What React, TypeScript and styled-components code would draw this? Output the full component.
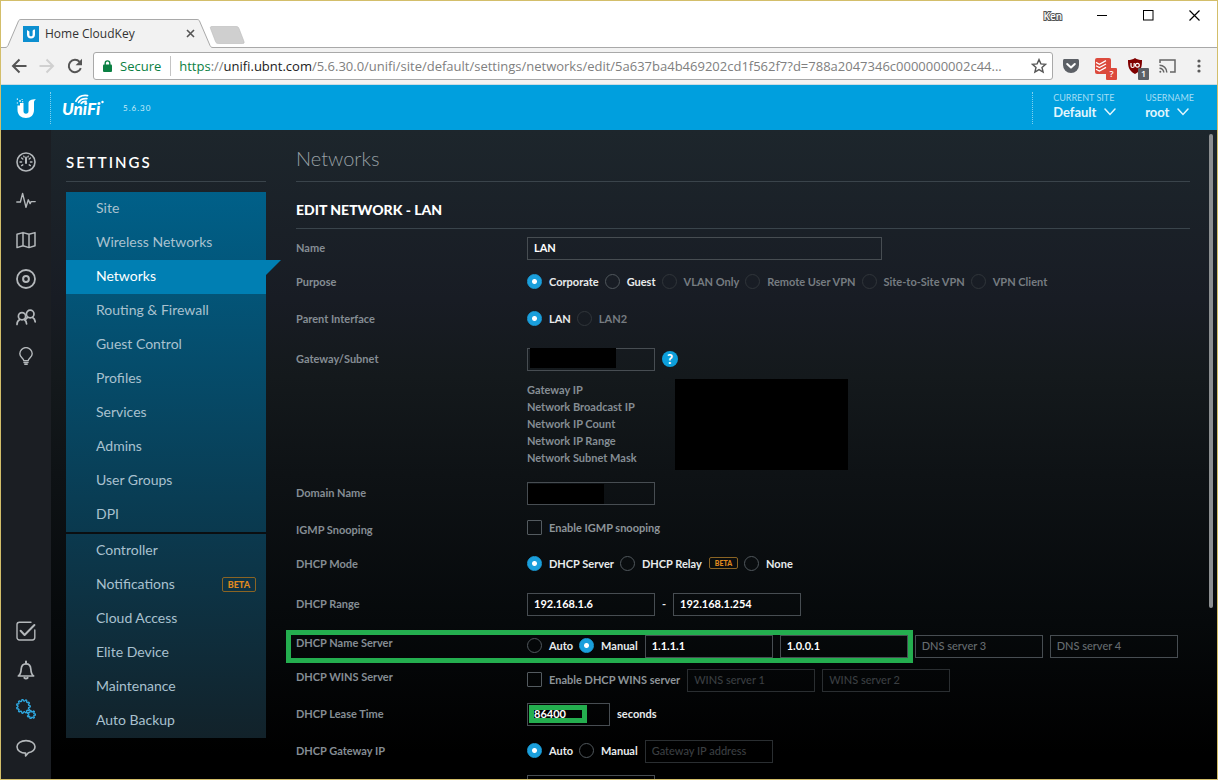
import React from "react";
import styled, { createGlobalStyle, css } from "styled-components";

const ui = `"Open Sans", "Noto Sans", sans-serif`;
const lato = `Lato, "Open Sans", sans-serif`;

const GlobalStyle = createGlobalStyle`
  *, *::before, *::after { box-sizing: border-box; }
  body { margin: 0; background: #000; font-family: ${lato}; }
  button, input, select { font: inherit; color: inherit; margin: 0; }
  button { padding: 0; border: 0; background: none; cursor: pointer; }
  ul { list-style: none; margin: 0; padding: 0; }
  svg { display: block; flex: none; }
`;

const Window = styled.div`
  display: flex;
  flex-direction: column;
  height: 100vh;
  border: 1px solid #d3be6a;
  overflow: hidden;
`;

/* ---------- browser chrome ---------- */

const TitleBar = styled.div`
  display: flex;
  justify-content: space-between;
  height: 47px;
  flex: none;
  background: #fff;
  border-bottom: 1px solid #a9a9a9;
  font-family: ${ui};
`;

const Tabs = styled.div`
  display: flex;
  align-items: flex-end;
  padding-left: 4px;
`;

const Tab = styled.div`
  position: relative;
  display: flex;
  align-items: center;
  width: 208px;
  height: 29px;
  margin-bottom: -1px;
  padding: 0 18px;
  font-size: 12px;
  color: #333;
`;

const TabShape = styled.svg`
  position: absolute;
  inset: 0;
`;

const TabTitle = styled.span`
  position: relative;
  flex: 1;
  margin-left: 6px;
  white-space: nowrap;
`;

const TabPart = styled.span`
  position: relative;
  display: flex;
`;

const TabClose = styled.button`
  position: relative;
`;

const NewTab = styled.button`
  margin: 0 0 3px -4px;
`;

const WindowButtons = styled.div`
  display: flex;
  align-items: center;
  gap: 35px;
  height: 29px;
  padding-right: 17px;
`;

const Profile = styled.button`
  font-size: 10px;
  font-weight: 600;
  color: #fff;
  -webkit-text-stroke: 2px #555;
  paint-order: stroke fill;
`;

const Toolbar = styled.div`
  display: flex;
  align-items: center;
  height: 37px;
  flex: none;
  padding: 0 8px 0 10px;
  background: #f2f2f2;
  border-bottom: 1px solid #c9dbe3;
  font-family: ${ui};
`;

const NavButtons = styled.div`
  display: flex;
  gap: 12px;
  margin-right: 10px;
`;

const Omnibox = styled.div`
  display: flex;
  align-items: center;
  flex: 1;
  min-width: 0;
  height: 28px;
  padding: 0 5px 0 9px;
  background: #fff;
  border: 1px solid #a9a9a9;
  border-radius: 3px;
  font-size: 13px;
  line-height: 20px;
`;

const Secure = styled.span`
  margin: 0 9px 0 8px;
  color: #0b8043;
`;

const Address = styled.div`
  flex: 1;
  min-width: 0;
  padding-left: 8px;
  border-left: 1px solid #c4c4c4;
  overflow: hidden;
  text-overflow: ellipsis;
  white-space: nowrap;
  color: #808080;
  outline: none;
`;

const Scheme = styled.span`
  color: #0b8043;
`;

const Host = styled.span`
  color: #222;
`;

const Extensions = styled.div`
  display: flex;
  align-items: center;
  gap: 12px;
  margin-left: 8px;
`;

const Extension = styled.button`
  position: relative;
  display: flex;
  justify-content: center;
  width: 20px;
`;

const ExtBadge = styled.span<{ $color: string }>`
  position: absolute;
  left: 13px;
  top: 10px;
  width: 11px;
  height: 12px;
  border-radius: 1px;
  background: ${(p) => p.$color};
  color: #fff;
  font-size: 9px;
  font-weight: 600;
  line-height: 12px;
  text-align: center;
`;

/* ---------- application header ---------- */

const Header = styled.header`
  display: flex;
  align-items: center;
  justify-content: space-between;
  height: 45px;
  flex: none;
  background: #009fde;
  color: #e3f6fd;
`;

const Brand = styled.div`
  display: flex;
  align-items: center;
`;

const LogoCell = styled.a`
  display: flex;
  justify-content: center;
  width: 50px;
  height: 32px;
  margin-right: 10px;
  align-items: center;
  border-right: 1px dotted #7fd0ef;
`;

const Version = styled.span`
  margin-left: 18px;
  font-size: 8px;
  letter-spacing: 1px;
  color: #c9ecf9;
`;

const Account = styled.div`
  display: flex;
  gap: 29px;
  height: 32px;
  padding: 0 23px 0 20px;
  border-left: 1px dotted #7fd0ef;
`;

const Picker = styled.div`
  display: flex;
  flex-direction: column;
`;

const PickerLabel = styled.label`
  font-size: 9px;
  line-height: 12px;
  color: #a5def5;
`;

const PickerValue = styled.div`
  display: flex;
  align-items: center;
  gap: 7px;
`;

const PickerSelect = styled.select`
  appearance: none;
  padding: 0;
  border: 0;
  background: none;
  font-size: 13px;
  font-weight: 700;
  line-height: 16px;
  color: #e3f6fd;
`;

/* ---------- application body ---------- */

const Body = styled.div`
  position: relative;
  display: flex;
  flex: 1;
  min-height: 0;
  overflow: hidden;
  background: linear-gradient(#1d262c 0%, #181c24 26%, #14191c 38%, #0e1215 53%, #06090b 76%, #000 96%);
`;

const Rail = styled.nav`
  display: flex;
  flex-direction: column;
  justify-content: space-between;
  flex: none;
  width: 50px;
  padding: 12px 0;
  background: #1b1e23;
`;

const RailGroup = styled.div`
  display: flex;
  flex-direction: column;
`;

const RailButton = styled.button<{ $active?: boolean }>`
  display: flex;
  align-items: center;
  justify-content: center;
  height: 39px;
  color: ${(p) => (p.$active ? "#2fa8e0" : "#b4b8bb")};
`;

const Side = styled.aside`
  flex: none;
  width: 215px;
  padding-left: 15px;
`;

const SideTitle = styled.h1`
  height: 52px;
  margin: 0 0 10px;
  padding-top: 12px;
  border-bottom: 1px solid #3a444b;
  font-size: 15px;
  font-weight: 600;
  line-height: 40px;
  letter-spacing: 2px;
  color: #fff;
`;

const Menu = styled.nav`
  display: flex;
  flex-direction: column;
  gap: 2px;
`;

const MenuGroup = styled.ul<{ $from: string; $to: string }>`
  background: linear-gradient(${(p) => p.$from}, ${(p) => p.$to});
`;

const MenuItem = styled.li`
  position: relative;
`;

const MenuLink = styled.a<{ $active?: boolean }>`
  display: flex;
  align-items: center;
  justify-content: space-between;
  height: 34px;
  padding: 0 10px 2px 30px;
  font-size: 14px;
  line-height: 16px;
  color: #a9c1cf;
  text-decoration: none;
  ${(p) =>
    p.$active &&
    css`
      background: #007fb3;
      color: #fff;
      &::after {
        content: "";
        position: absolute;
        left: 100%;
        top: 0;
        border: solid transparent;
        border-width: 15px 15px 0 0;
        border-top-color: #007fb3;
      }
    `}
`;

const Beta = styled.span<{ $small?: boolean }>`
  border: 1px solid #8a6424;
  border-radius: 2px;
  padding: 0 5px;
  font-size: ${(p) => (p.$small ? 7 : 9)}px;
  font-weight: 900;
  line-height: ${(p) => (p.$small ? 10 : 13)}px;
  color: #e08a1e;
`;

const Main = styled.main`
  flex: 1;
  min-width: 0;
  padding: 0 27px 0 30px;
`;

const PageTitle = styled.h2`
  height: 52px;
  margin: 0;
  padding-top: 12px;
  border-bottom: 1px solid #3a444b;
  font-size: 20px;
  font-weight: 300;
  line-height: 32px;
  color: #98a0a5;
`;

const SectionTitle = styled.h3`
  height: 47px;
  margin: 0;
  padding-top: 8px;
  border-bottom: 1px solid #3a444b;
  font-size: 14px;
  font-weight: 900;
  line-height: 40px;
  color: #fff;
`;

const Row = styled.div<{ $h: number }>`
  position: relative;
  display: grid;
  grid-template-columns: 231px 1fr;
  align-items: start;
  min-height: ${(p) => p.$h}px;
  font-size: 11px;
  font-weight: 700;
  color: #e8ebec;
`;

const RowLabel = styled.span<{ $h: number }>`
  line-height: ${(p) => p.$h}px;
  color: #858d94;
`;

const Controls = styled.div<{ $h: number }>`
  position: relative;
  display: flex;
  align-items: center;
  gap: 7px;
  height: ${(p) => p.$h}px;
  white-space: nowrap;
`;

const Choices = styled.div`
  display: flex;
  gap: 6px;
`;

const Choice = styled.label<{ $muted?: boolean; $disabled?: boolean }>`
  display: flex;
  align-items: center;
  gap: 7px;
  padding-bottom: 2px;
  ${(p) => p.$muted && "color: #8d9499;"}
  ${(p) => p.$disabled && "color: #767c81;"}
`;

const Radio = styled.input.attrs({ type: "radio" })`
  appearance: none;
  width: 15px;
  height: 15px;
  border: 1px solid #50575c;
  border-radius: 50%;
  &:checked {
    border-color: #1a9fdc;
    background: radial-gradient(circle, #fff 2px, #1a9fdc 3px);
  }
  &:disabled {
    border-color: #30353a;
  }
`;

const Check = styled.input.attrs({ type: "checkbox" })`
  appearance: none;
  width: 15px;
  height: 15px;
  border: 1px solid #545b60;
  border-radius: 1px;
`;

const Field = styled.input.attrs({ type: "text" })<{ $w?: number }>`
  position: relative;
  width: ${(p) => p.$w ?? 128}px;
  height: 23px;
  padding: 0 6px 2px;
  border: 1px solid #474d52;
  border-radius: 0;
  background: none;
  color: #fff;
  outline: none;
  &::placeholder {
    color: #666c70;
    font-weight: 500;
  }
  &:disabled {
    border-color: #2a2e31;
  }
  &:disabled::placeholder {
    color: #3b3f42;
  }
`;

const Unit = styled.span`
  padding-bottom: 2px;
`;

const Help = styled.button`
  width: 16px;
  height: 16px;
  border-radius: 50%;
  background: #0d9fdb;
  color: #fff;
  font-size: 13px;
  font-weight: 900;
  line-height: 15px;
`;

const Redaction = styled.span<{ $x: number; $y: number; $w: number }>`
  position: absolute;
  left: ${(p) => p.$x}px;
  top: ${(p) => p.$y}px;
  width: ${(p) => p.$w}px;
  height: 20px;
  background: #000;
`;

const Info = styled.div`
  display: flex;
  align-items: center;
  padding-top: 2px;
`;

const InfoList = styled.ul`
  width: 148px;
  padding-bottom: 2px;
  line-height: 17px;
  color: #858d94;
`;

const InfoValues = styled.div`
  width: 173px;
  height: 91px;
  background: #000;
`;

const Highlight = styled.span<{ $x: number; $y: number; $w: number; $h: number }>`
  position: absolute;
  left: ${(p) => p.$x}px;
  top: ${(p) => p.$y}px;
  width: ${(p) => p.$w}px;
  height: ${(p) => p.$h}px;
  border: 5px solid #24ae4f;
  pointer-events: none;
`;

const ScrollThumb = styled.div`
  position: absolute;
  right: 4px;
  top: 4px;
  width: 4px;
  height: 73%;
  border-radius: 2px;
  background: #8c8f91;
`;

/* ---------- drawings ---------- */

const line = {
  fill: "none",
  stroke: "currentColor",
  strokeWidth: 1.4,
  strokeLinecap: "round" as const,
  strokeLinejoin: "round" as const,
};

const gear = (cx: number, cy: number, r: number, n: number) =>
  Array.from({ length: n * 4 }, (_, i) => {
    const a = ((i - 0.5) / (n * 4)) * Math.PI * 2;
    const rad = i % 4 < 2 ? r + 1.3 : r - 0.2;
    return `${i ? "L" : "M"}${(cx + rad * Math.cos(a)).toFixed(2)} ${(cy + rad * Math.sin(a)).toFixed(2)}`;
  }).join("") + "Z";

const railIcons: Record<string, React.ReactNode> = {
  Dashboard: (
    <>
      <circle cx="10" cy="10" r="9" strokeWidth="1.6" />
      <path d="M10 5.5v5.5" strokeWidth="2" />
      <path d="M4 10h1.6M14.4 10H16M5.6 6l1.2 1M14.4 6l-1.2 1M5.6 13.6l1.2-.8M14.4 13.6l-1.2-.8M7.8 4.2l.3.8M12.2 4.2l-.3.8" />
    </>
  ),
  Statistics: <path d="M.8 11h3.6L6.6 2.4l3.4 14 2.3-7.6 1.8 3.800 1-2h4.100" />,
  Map: (
    <path d="M1 4.200 7 2.600v13.200l-6 1.800zM7 2.600l6 1.600v13.400l-6-1.800zM13 4.200l6-1.600v13.200l-6 1.800z" strokeWidth="1.500" />
  ),
  Devices: (
    <>
      <circle cx="10" cy="10" r="9" strokeWidth="1.8" />
      <circle cx="10" cy="10" r="2.900" strokeWidth="2" />
    </>
  ),
  Clients: (
    <>
      <circle cx="6" cy="8.200" r="3.600" strokeWidth="1.700" />
      <circle cx="14.200" cy="6" r="3.800" strokeWidth="1.700" />
      <path d="M1 16.400c0-2.400 1-3.800 2.800-4.800M8.200 11.400c1.400.8 2.200 2.400 2.400 4.600M11.800 9.400c-1 .4-1.800 1.200-2.200 2.200M16.600 9.400c1.600.8 2.400 2.200 2.600 4.400" strokeWidth="1.700" />
    </>
  ),
  Insights: (
    <>
      <path d="M7.800 13.800c0-2.400-4-3.400-4-7a6.200 6.200 0 0 1 12.400 0c0 3.600-4 4.600-4 7z" />
      <path d="M7.900 15.600h4.200M8.800 17.300h2.400" />
    </>
  ),
  Tasks: (
    <>
      <path d="M15 1.200H3.400A2.400 2.400 0 0 0 1 3.600v13A2.400 2.400 0 0 0 3.400 19h13a2.400 2.400 0 0 0 2.400-2.400V9" />
      <path d="m4.600 9.800 4 4.200L18.400 4" strokeWidth="2" />
    </>
  ),
  Alerts: (
    <>
      <path d="M2.400 16c2.200-1.600 2.600-3.600 2.800-7 .2-3.200 1.800-5.200 4.800-5.200s4.600 2 4.800 5.200c.2 3.400.6 5.400 2.800 7z" strokeWidth="1.700" />
      <path d="M10 1.400v2M8.400 17.800c.8 1 2.400 1 3.200 0" strokeWidth="2" />
    </>
  ),
  Settings: (
    <>
      <path d={gear(7.4, 7.4, 5.6, 11)} strokeWidth="1.300" />
      <path d={gear(15.4, 15.6, 2.9, 7)} strokeWidth="1.300" />
    </>
  ),
  Chat: (
    <path d="M10 2.600c5 0 9 2.600 9 6.200 0 3-2.900 5.200-6.600 6L9.600 18v-2.900C4.800 15.100 1 12.400 1 8.800s4-6.200 9-6.200z" strokeWidth="1.600" />
  ),
};

const ULogo = () => (
  <svg width="22" height="22" viewBox="0 0 22 22" fill="#fff">
    <path d="M2.500 8.500H5V6h3.500v8c0 1.800.9 2.700 2.500 2.700s2.500-.9 2.500-2.700V6c0-2.500 2.500-3.800 7.500-3.800-1.500.8-2 1.800-2 3.300V13c0 5-3.200 8-8 8s-8.500-3-8.500-8z" />
    <path d="M1.800 1.600H3v1.200H1.800zM4.200 3.200h1.600v1.600H4.200zM1.800 5.400H3v1.200H1.800zM6.600 2h1v1h-1zM7 4.200h1.200v1H7z" />
  </svg>
);

const UnifiLogo = () => (
  <svg width="44" height="28" viewBox="0 0 44 28">
    <text x="1" y="21" fill="#fff" fontFamily={`"Liberation Sans Narrow", Lato, sans-serif`} fontSize="17" fontWeight="900" fontStyle="italic">
      UniFi
    </text>
    <g fill="none" stroke="#fff" strokeWidth="1.800" strokeLinecap="round">
      <path d="M15 7.200C17 3 21 .8 26.500 1.600" />
      <path d="M17.600 8.400C19.200 5.600 22 4.200 25.800 4.600" />
      <path d="M20.200 9.400c1.200-1.600 2.800-2.200 4.800-2" />
    </g>
    <circle cx="41.500" cy="8" r="1.200" fill="#fff" />
  </svg>
);

const Chevron = () => (
  <svg width="12" height="8" viewBox="0 0 12 8" fill="none" stroke="#e3f6fd" strokeWidth="1.500" strokeLinecap="round">
    <path d="m1 1 5 5.400L11 1" />
  </svg>
);

/* ---------- data ---------- */

const siteMenu = ["Site", "Wireless Networks", "Networks", "Routing & Firewall", "Guest Control", "Profiles", "Services", "Admins", "User Groups", "DPI"];
const controllerMenu = ["Controller", "Notifications", "Cloud Access", "Elite Device", "Maintenance", "Auto Backup"];
const infoLabels = ["Gateway IP", "Network Broadcast IP", "Network IP Count", "Network IP Range", "Network Subnet Mask"];

interface Option {
  text: string;
  disabled?: boolean;
  beta?: boolean;
}

const RadioSet = ({ name, value, options }: { name: string; value: string; options: Option[] }) => (
  <Choices>
    {options.map((o) => (
      <Choice key={o.text} $disabled={o.disabled}>
        <Radio name={name} defaultChecked={o.text === value} disabled={o.disabled} />
        {o.text}
        {o.beta && <Beta $small>BETA</Beta>}
      </Choice>
    ))}
  </Choices>
);

interface FormRowProps {
  label: string;
  h: number;
  labelH?: number;
  controlH?: number;
  children: React.ReactNode;
}

const FormRow = ({ label, h, labelH = h, controlH = h, children }: FormRowProps) => (
  <Row $h={h} role="group" aria-label={label}>
    <RowLabel $h={labelH}>{label}</RowLabel>
    <Controls $h={controlH}>{children}</Controls>
  </Row>
);

const RailItems = ({ names, active }: { names: string[]; active?: string }) => (
  <RailGroup>
    {names.map((n) => (
      <RailButton key={n} aria-label={n} $active={n === active}>
        <svg width="20" height="20" viewBox="0 0 20 20" {...line}>
          {railIcons[n]}
        </svg>
      </RailButton>
    ))}
  </RailGroup>
);

const MenuItems = ({ items }: { items: string[] }) => (
  <>
    {items.map((item) => (
      <MenuItem key={item}>
        <MenuLink href="#" $active={item === "Networks"}>
          {item}
          {item === "Notifications" && <Beta>BETA</Beta>}
        </MenuLink>
      </MenuItem>
    ))}
  </>
);

const BrowserChrome = () => (
  <>
    <TitleBar>
      <Tabs>
        <Tab>
          <TabShape width="208" height="29" viewBox="0 0 208 29">
            <path d="M0 28.500C2 28.500 2.500 27.500 3 26.500L13.500 2C14 1 14.500.5 16 .5H192c1.500 0 2 .5 2.500 1.500L205 26.500c.5 1 1 2 3 2V29H0z" fill="#f2f2f2" />
            <path d="M0 28.500C2 28.500 2.500 27.500 3 26.500L13.500 2C14 1 14.500.5 16 .5H192c1.500 0 2 .5 2.500 1.500L205 26.500c.5 1 1 2 3 2" fill="none" stroke="#a9a9a9" />
          </TabShape>
          <TabPart>
            <svg width="16" height="16" viewBox="0 0 16 16">
              <rect width="16" height="16" fill="#0c8fd0" />
              <path d="M4 4v4.500c0 2.500 1.600 4 4 4s4-1.500 4-4V3.500c-1.600 0-2.400.6-2.400 1.600v3.600c0 1-.6 1.600-1.600 1.600s-1.600-.6-1.600-1.600V5.600z" fill="#fff" />
            </svg>
          </TabPart>
          <TabTitle>Home CloudKey</TabTitle>
          <TabClose aria-label="Close tab">
            <svg width="9" height="9" viewBox="0 0 9 9" stroke="#555" strokeWidth="1.600">
              <path d="m1 1 7 7M8 1 1 8" />
            </svg>
          </TabClose>
        </Tab>
        <NewTab aria-label="New tab">
          <svg width="36" height="18" viewBox="0 0 36 18">
            <path d="M3 .5h24c1.500 0 2.500.5 3 2l5 13c.5 1.500 0 2-1.500 2H9.500c-1.500 0-2.500-.5-3-2L1.500 2.500C1 1 1.500.5 3 .5z" fill="#cfcfcf" stroke="#bbb" strokeWidth=".6" />
          </svg>
        </NewTab>
      </Tabs>
      <WindowButtons>
        <Profile>Ken</Profile>
        <button aria-label="Minimize">
          <svg width="11" height="11" viewBox="0 0 11 11" stroke="#000"><path d="M0 5.500h10" /></svg>
        </button>
        <button aria-label="Maximize">
          <svg width="11" height="11" viewBox="0 0 11 11" stroke="#000" fill="none"><rect x=".5" y=".5" width="9.500" height="9.500" /></svg>
        </button>
        <button aria-label="Close">
          <svg width="11" height="11" viewBox="0 0 11 11" stroke="#000" strokeWidth="1.200"><path d="m.5.5 10 10M10.500.5l-10 10" /></svg>
        </button>
      </WindowButtons>
    </TitleBar>
    <Toolbar>
      <NavButtons>
        <button aria-label="Back">
          <svg width="16" height="16" viewBox="0 0 16 16" fill="none" stroke="#555" strokeWidth="2"><path d="M15.500 8H2.500M8.500 1.500 2 8l6.500 6.500" /></svg>
        </button>
        <button aria-label="Forward" disabled>
          <svg width="16" height="16" viewBox="0 0 16 16" fill="none" stroke="#d0d0d0" strokeWidth="2"><path d="M.5 8h13M7.500 1.500 14 8l-6.500 6.500" /></svg>
        </button>
        <button aria-label="Reload">
          <svg width="16" height="16" viewBox="0 0 16 16" fill="none" stroke="#555" strokeWidth="2"><path d="M13.800 10.200A6.200 6.200 0 1 1 12.600 3.800" /><path d="M15 .8v6.400H8.600z" fill="#555" stroke="none" /></svg>
        </button>
      </NavButtons>
      <Omnibox>
        <svg width="9" height="12" viewBox="0 0 9 12"><rect y="4.500" width="9" height="7.500" rx="1" fill="#0b8043" /><path d="M2.200 5V3.200a2.300 2.300 0 0 1 4.600 0V5" fill="none" stroke="#0b8043" strokeWidth="1.400" /></svg>
        <Secure>Secure</Secure>
        <Address role="textbox" aria-label="Address" contentEditable suppressContentEditableWarning>
          <Scheme>https</Scheme>://<Host>unifi.ubnt.com</Host>/5.6.30.0/unifi/site/default/settings/networks/edit/5a637ba4b469202cd1f562f7?d=788a2047346c0000000002c44...
        </Address>
        <svg width="16" height="16" viewBox="0 0 16 16" fill="none" stroke="#555" strokeWidth="1.400"><path d="m8 1.600 1.900 4.300 4.700.4-3.600 3.100 1.100 4.600L8 11.600 3.900 14 5 9.400 1.400 6.300l4.700-.4z" /></svg>
      </Omnibox>
      <Extensions>
        <Extension aria-label="Pocket">
          <svg width="16" height="16" viewBox="0 0 16 16"><path d="M1.500 1h13C15.400 1 16 1.600 16 2.500V7a8 8 0 0 1-16 0V2.500C0 1.600.6 1 1.500 1z" fill="#5c6066" /><path d="M4.200 6 8 9.600 11.800 6" fill="none" stroke="#fff" strokeWidth="2" strokeLinecap="round" strokeLinejoin="round" /></svg>
        </Extension>
        <Extension aria-label="Todoist">
          <svg width="16" height="16" viewBox="0 0 16 16"><rect width="16" height="16" rx="2" fill="#dc4a3d" /><path d="m1 4.400 3.400 1.800L11 2.600M1 7.800l3.400 1.800L11 6M1 11.200 4.400 13 11 9.400" fill="none" stroke="#fff" strokeWidth="1.200" /></svg>
          <ExtBadge $color="#dc4a3d">?</ExtBadge>
        </Extension>
        <Extension aria-label="uBlock">
          <svg width="16" height="16" viewBox="0 0 16 16"><path d="M8 0c2 1.400 4.500 2 7 2 0 6.600-.6 10.600-7 14C1.600 12.600 1 8.600 1 2c2.500 0 5-.6 7-2z" fill="#800000" /><path d="M4 5v3c0 1 .6 1.500 1.500 1.500S7.200 9 7.200 8V5" fill="none" stroke="#fff" strokeWidth="1.200" /><circle cx="10.400" cy="7.200" r="1.900" fill="none" stroke="#fff" strokeWidth="1.200" /></svg>
          <ExtBadge $color="#5c6066">1</ExtBadge>
        </Extension>
        <Extension aria-label="Cast">
          <svg width="17" height="14" viewBox="0 0 17 14" fill="none" stroke="#666" strokeWidth="1.500"><path d="M1 4V1h15v12h-5M.5 6.200A7.300 7.300 0 0 1 7.800 13.500M.5 9.200a4.300 4.300 0 0 1 4.300 4.300" /><circle cx="1.300" cy="12.700" r="1" fill="#666" stroke="none" /></svg>
        </Extension>
        <Extension aria-label="Menu">
          <svg width="4" height="14" viewBox="0 0 4 14" fill="#5a5a5a"><circle cx="2" cy="2" r="1.600" /><circle cx="2" cy="7" r="1.600" /><circle cx="2" cy="12" r="1.600" /></svg>
        </Extension>
      </Extensions>
    </Toolbar>
  </>
);

export default function App() {
  return (
    <Window>
      <GlobalStyle />
      <BrowserChrome />
      <Header>
        <Brand>
          <LogoCell href="#" aria-label="Ubiquiti"><ULogo /></LogoCell>
          <UnifiLogo />
          <Version>5.6.30</Version>
        </Brand>
        <Account>
          <Picker>
            <PickerLabel htmlFor="site">CURRENT SITE</PickerLabel>
            <PickerValue>
              <PickerSelect id="site"><option>Default</option></PickerSelect>
              <Chevron />
            </PickerValue>
          </Picker>
          <Picker>
            <PickerLabel htmlFor="user">USERNAME</PickerLabel>
            <PickerValue>
              <PickerSelect id="user"><option>root</option></PickerSelect>
              <Chevron />
            </PickerValue>
          </Picker>
        </Account>
      </Header>
      <Body>
        <Rail>
          <RailItems names={["Dashboard", "Statistics", "Map", "Devices", "Clients", "Insights"]} />
          <RailItems names={["Tasks", "Alerts", "Settings", "Chat"]} active="Settings" />
        </Rail>
        <Side>
          <SideTitle>SETTINGS</SideTitle>
          <Menu>
            <MenuGroup $from="#006089" $to="#0a394e"><MenuItems items={siteMenu} /></MenuGroup>
            <MenuGroup $from="#0b394e" $to="#12222a"><MenuItems items={controllerMenu} /></MenuGroup>
          </Menu>
        </Side>
        <Main>
          <PageTitle>Networks</PageTitle>
          <SectionTitle>EDIT NETWORK - LAN</SectionTitle>
          <FormRow label="Name" h={38}>
            <Field aria-label="Name" $w={355} defaultValue="LAN" />
          </FormRow>
          <FormRow label="Purpose" h={30}>
            <RadioSet
              name="purpose"
              value="Corporate"
              options={[
                { text: "Corporate" },
                { text: "Guest" },
                { text: "VLAN Only", disabled: true },
                { text: "Remote User VPN", disabled: true },
                { text: "Site-to-Site VPN", disabled: true },
                { text: "VPN Client", disabled: true },
              ]}
            />
          </FormRow>
          <FormRow label="Parent Interface" h={44}>
            <RadioSet name="parent" value="LAN" options={[{ text: "LAN" }, { text: "LAN2", disabled: true }]} />
          </FormRow>
          <FormRow label="Gateway/Subnet" h={36}>
            <Field aria-label="Gateway/Subnet" />
            <Redaction $x={3} $y={7} $w={86} />
            <Help aria-label="Help">?</Help>
          </FormRow>
          <Row $h={95}>
            <span />
            <Info>
              <InfoList>{infoLabels.map((t) => <li key={t}>{t}</li>)}</InfoList>
              <InfoValues />
            </Info>
          </Row>
          <FormRow label="Domain Name" h={42}>
            <Field aria-label="Domain Name" />
            <Redaction $x={1} $y={12} $w={76} />
          </FormRow>
          <FormRow label="IGMP Snooping" h={32} controlH={28}>
            <Choice $muted><Check />Enable IGMP snooping</Choice>
          </FormRow>
          <FormRow label="DHCP Mode" h={36}>
            <RadioSet
              name="mode"
              value="DHCP Server"
              options={[{ text: "DHCP Server" }, { text: "DHCP Relay", beta: true }, { text: "None" }]}
            />
          </FormRow>
          <FormRow label="DHCP Range" h={44}>
            <Field aria-label="Range start" defaultValue="192.168.1.6" />
            <Unit>-</Unit>
            <Field aria-label="Range end" defaultValue="192.168.1.254" />
          </FormRow>
          <FormRow label="DHCP Name Server" h={40} labelH={34}>
            <RadioSet name="dns" value="Manual" options={[{ text: "Auto" }, { text: "Manual" }]} />
            <Field aria-label="DNS server 1" defaultValue="1.1.1.1" />
            <Field aria-label="DNS server 2" defaultValue="1.0.0.1" />
            <Field aria-label="DNS server 3" placeholder="DNS server 3" />
            <Field aria-label="DNS server 4" placeholder="DNS server 4" />
            <Highlight $x={-241} $y={4} $w={627} $h={33} />
          </FormRow>
          <FormRow label="DHCP WINS Server" h={28} labelH={22}>
            <Choice $muted><Check />Enable DHCP WINS server</Choice>
            <Field aria-label="WINS server 1" placeholder="WINS server 1" disabled />
            <Field aria-label="WINS server 2" placeholder="WINS server 2" disabled />
          </FormRow>
          <FormRow label="DHCP Lease Time" h={40}>
            <Highlight $x={2} $y={11} $w={58} $h={18} />
            <Field aria-label="DHCP Lease Time" $w={83} defaultValue="86400" />
            <Unit>seconds</Unit>
          </FormRow>
          <FormRow label="DHCP Gateway IP" h={34}>
            <RadioSet name="gateway" value="Auto" options={[{ text: "Auto" }, { text: "Manual" }]} />
            <Field aria-label="Gateway IP address" placeholder="Gateway IP address" disabled />
          </FormRow>
          <FormRow label="" h={36}>
            <Field aria-label="DHCP option" />
          </FormRow>
        </Main>
        <ScrollThumb />
      </Body>
    </Window>
  );
}
